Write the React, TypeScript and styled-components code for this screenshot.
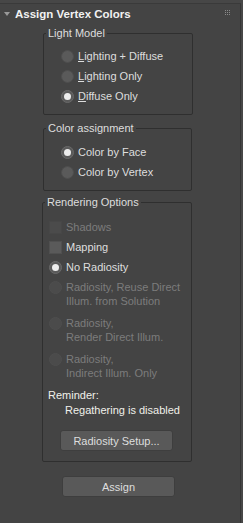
import React from "react"
import styled, { createGlobalStyle } from "styled-components"

const colors = {
  bg: "#444444",
  frame: "#2f2f2f",
  text: "#dedede",
  title: "#f2f2f2",
  disabled: "#7c7c7c",
  control: "#5a5a5a",
  controlDisabled: "#4b4b4b",
  button: "#595959",
}

const GlobalStyle = createGlobalStyle`
  html, body {
    margin: 0;
    padding: 0;
    background: #474747;
  }
  body {
    font-family: "Liberation Sans", Arial, sans-serif;
    font-size: 11px;
    color: ${colors.text};
  }
`

type RadioProps = {
  label: React.ReactNode
  checked?: boolean
  disabled?: boolean
}

const Radio: React.FC<RadioProps> = ({ label, checked, disabled }) => (
  <Row>
    <RadioDot checked={checked} disabled={disabled} />
    <Label disabled={disabled}>{label}</Label>
  </Row>
)

const Check: React.FC<{ label: string; disabled?: boolean }> = ({
  label,
  disabled,
}) => (
  <Row>
    <CheckBox disabled={disabled} />
    <Label disabled={disabled}>{label}</Label>
  </Row>
)

const MultiRadio: React.FC<{ lines: string[] }> = ({ lines }) => (
  <MultiRow>
    <RadioDot disabled />
    <Label disabled>
      {lines.map((l) => (
        <Line key={l}>{l}</Line>
      ))}
    </Label>
  </MultiRow>
)

const Key: React.FC<{ k: string; rest: string }> = ({ k, rest }) => (
  <>
    <u>{k}</u>
    {rest}
  </>
)

export default function App() {
  return (
    <>
      <GlobalStyle />
      <Rollout>
        <TitleBar>
          <Arrow />
          <Title>Assign Vertex Colors</Title>
          <Grip width="6" height="6" viewBox="0 0 6 6">
            {[0, 2, 4].map((y) =>
              [0, 2, 4].map((x) => (
                <rect key={`${x}-${y}`} x={x} y={y} width="1" height="1" fill="#8a8a8a" />
              ))
            )}
          </Grip>
        </TitleBar>

        <Group top={9} left={43} width={150} pad={17} padTop={12} padBottom={8}>
          <Legend>Light Model</Legend>
          <Radio label={<Key k="L" rest="ighting + Diffuse" />} />
          <Radio label={<Key k="L" rest="ighting Only" />} />
          <Radio checked label={<Key k="D" rest="iffuse Only" />} />
        </Group>

        <Group top={13} left={43} width={149} pad={17} padTop={13} padBottom={8}>
          <Legend>Color assignment</Legend>
          <Radio checked label="Color by Face" />
          <Radio label="Color by Vertex" />
        </Group>

        <Group top={11} left={42} width={150} pad={6} padTop={14} padBottom={10}>
          <Legend>Rendering Options</Legend>
          <Check disabled label="Shadows" />
          <Check label="Mapping" />
          <Radio checked label="No Radiosity" />
          <MultiRadio lines={["Radiosity, Reuse Direct", "Illum. from Solution"]} />
          <MultiRadio lines={["Radiosity,", "Render Direct Illum."]} />
          <MultiRadio lines={["Radiosity,", "Indirect Illum. Only"]} />
          <Reminder>Reminder:</Reminder>
          <ReminderText>Regathering is disabled</ReminderText>
          <Button offset={11}>Radiosity Setup...</Button>
        </Group>

        <Button offset={62} style={{ marginTop: 14 }}>
          Assign
        </Button>
      </Rollout>
    </>
  )
}

const Rollout = styled.div`
  width: 240px;
  height: 520px;
  margin-top: 3px;
  background: ${colors.bg};
  border-top: 1px solid #3a3a3a;
  border-right: 1px solid #363636;
  display: flex;
  flex-direction: column;
  align-items: flex-start;
`

const TitleBar = styled.div`
  width: 100%;
  height: 20px;
  display: flex;
  align-items: center;
`

const Arrow = styled.span`
  width: 0;
  height: 0;
  margin-left: 4px;
  margin-right: 5px;
  border-left: 3px solid transparent;
  border-right: 3px solid transparent;
  border-top: 4px solid #9a9a9a;
  margin-top: -1px;
`

const Title = styled.span`
  font-weight: bold;
  font-size: 11.5px;
  color: ${colors.title};
`

const Grip = styled.svg`
  margin-left: auto;
  margin-right: 9px;
  margin-top: -2px;
`

type GroupProps = {
  top: number
  left: number
  width: number
  pad: number
  padTop: number
  padBottom: number
}

const Group = styled.div<GroupProps>`
  position: relative;
  box-sizing: border-box;
  margin-top: ${({ top }) => top}px;
  margin-left: ${({ left }) => left}px;
  width: ${({ width }) => width}px;
  padding: ${({ padTop, pad, padBottom }) => `${padTop}px 0 ${padBottom}px ${pad}px`};
  border: 1px solid ${colors.frame};
  border-radius: 2px;
  display: flex;
  flex-direction: column;
`

const Legend = styled.span`
  position: absolute;
  top: -8px;
  left: 2px;
  padding: 0 2px;
  line-height: 14px;
  font-size: 11px;
  background: ${colors.bg};
  color: ${colors.text};
`

const Row = styled.div`
  height: 20px;
  display: flex;
  align-items: center;
`

const MultiRow = styled.div`
  height: 36px;
  box-sizing: border-box;
  padding-top: 3px;
  display: flex;
  align-items: flex-start;
`

const Label = styled.span<{ disabled?: boolean }>`
  margin-left: 4px;
  font-size: 11px;
  line-height: 14px;
  color: ${({ disabled }) => (disabled ? colors.disabled : colors.text)};
  white-space: nowrap;
`

const Line = styled.div`
  line-height: 14px;
`

const RadioDot = styled.span<{ checked?: boolean; disabled?: boolean }>`
  flex: none;
  width: 13px;
  height: 13px;
  border-radius: 50%;
  box-sizing: border-box;
  background: ${({ disabled }) => (disabled ? colors.controlDisabled : colors.control)};
  border: 1px solid ${({ checked }) => (checked ? "#6a6a6a" : "#4e4e4e")};
  display: flex;
  align-items: center;
  justify-content: center;
  margin-top: ${({ disabled }) => (disabled ? "1px" : "0")};

  &::after {
    content: "";
    display: ${({ checked }) => (checked ? "block" : "none")};
    width: 7px;
    height: 7px;
    border-radius: 50%;
    background: #ededed;
  }
`

const CheckBox = styled.span<{ disabled?: boolean }>`
  flex: none;
  width: 13px;
  height: 13px;
  box-sizing: border-box;
  background: ${({ disabled }) => (disabled ? colors.controlDisabled : colors.control)};
  border: 1px solid ${({ disabled }) => (disabled ? "#474747" : "#505050")};
`

const Reminder = styled.div`
  margin-top: 3px;
  margin-left: -1px;
  font-size: 11px;
  line-height: 14px;
  color: #f0f0ea;
`

const ReminderText = styled.div`
  margin-top: 1px;
  margin-left: 16px;
  font-size: 11px;
  line-height: 14px;
  color: #f0f0ea;
  white-space: nowrap;
`

const Button = styled.div<{ offset: number }>`
  box-sizing: border-box;
  margin-top: 13px;
  margin-left: ${({ offset }) => offset}px;
  width: 113px;
  height: 21px;
  border: 1px solid #3e3e3e;
  border-radius: 3px;
  background: ${colors.button};
  color: ${colors.text};
  font-size: 11px;
  display: flex;
  align-items: center;
  justify-content: center;
`
